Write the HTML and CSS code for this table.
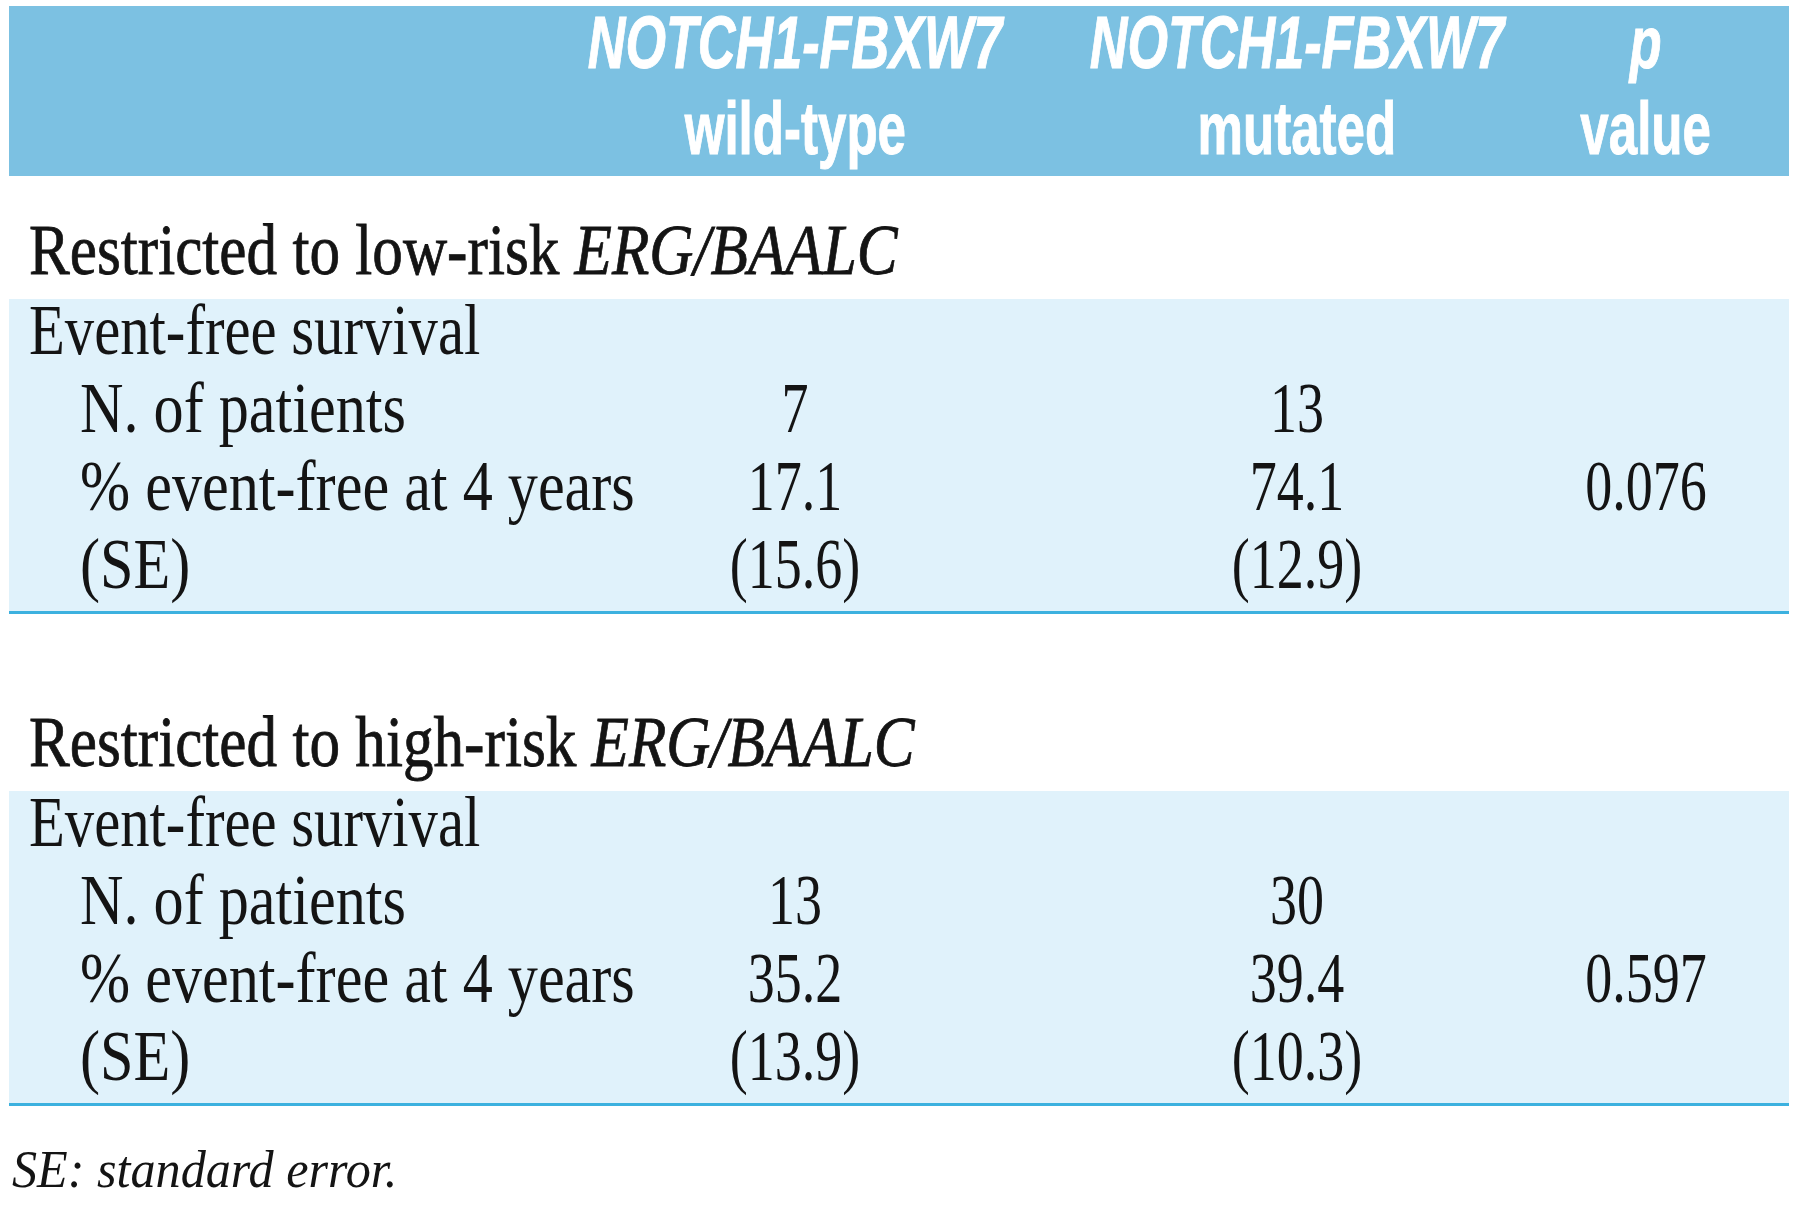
FILE: index.html
```html
<!DOCTYPE html>
<html lang="en">
<head>
<meta charset="utf-8">
<title>NOTCH1-FBXW7 event-free survival</title>
<link rel="stylesheet" href="styles.css">
</head>
<body>
<div class="table">
  <div class="thead">
    <div class="hcell"></div>
    <div class="hcell">
      <div class="l1"><span class="hx it">NOTCH1-FBXW7</span></div>
      <div class="l2"><span class="hx">wild-type</span></div>
    </div>
    <div class="hcell">
      <div class="l1"><span class="hx it">NOTCH1-FBXW7</span></div>
      <div class="l2"><span class="hx">mutated</span></div>
    </div>
    <div class="hcell">
      <div class="l1"><span class="hx it">p</span></div>
      <div class="l2"><span class="hx">value</span></div>
    </div>
  </div>

  <section class="group">
    <div class="gtitle"><span class="tt">Restricted to low-risk <i>ERG/BAALC</i></span></div>
    <div class="band">
      <div class="row">
        <div class="lab"><span class="tl">Event-free survival</span></div>
        <div class="num"></div><div class="num"></div><div class="num"></div>
      </div>
      <div class="row">
        <div class="lab sub"><span class="tl">N. of patients</span></div>
        <div class="num"><span class="tn">7</span></div>
        <div class="num"><span class="tn">13</span></div>
        <div class="num"></div>
      </div>
      <div class="row">
        <div class="lab sub"><span class="tl">% event-free at 4 years</span></div>
        <div class="num"><span class="tn">17.1</span></div>
        <div class="num"><span class="tn">74.1</span></div>
        <div class="num"><span class="tn">0.076</span></div>
      </div>
      <div class="row">
        <div class="lab sub"><span class="tl">(SE)</span></div>
        <div class="num"><span class="tn">(15.6)</span></div>
        <div class="num"><span class="tn">(12.9)</span></div>
        <div class="num"></div>
      </div>
    </div>
  </section>

  <section class="group second">
    <div class="gtitle"><span class="tt">Restricted to high-risk <i>ERG/BAALC</i></span></div>
    <div class="band">
      <div class="row">
        <div class="lab"><span class="tl">Event-free survival</span></div>
        <div class="num"></div><div class="num"></div><div class="num"></div>
      </div>
      <div class="row">
        <div class="lab sub"><span class="tl">N. of patients</span></div>
        <div class="num"><span class="tn">13</span></div>
        <div class="num"><span class="tn">30</span></div>
        <div class="num"></div>
      </div>
      <div class="row">
        <div class="lab sub"><span class="tl">% event-free at 4 years</span></div>
        <div class="num"><span class="tn">35.2</span></div>
        <div class="num"><span class="tn">39.4</span></div>
        <div class="num"><span class="tn">0.597</span></div>
      </div>
      <div class="row">
        <div class="lab sub"><span class="tl">(SE)</span></div>
        <div class="num"><span class="tn">(13.9)</span></div>
        <div class="num"><span class="tn">(10.3)</span></div>
        <div class="num"></div>
      </div>
    </div>
  </section>

  <p class="note"><span class="tf">SE: standard error.</span></p>
</div>
</body>
</html>
```

FILE: styles.css
```css
html, body {
  margin: 0;
  padding: 0;
  background: #ffffff;
}

body {
  font-family: "Liberation Serif", "Times New Roman", serif;
  color: #141414;
}

.table {
  width: 1780px;
  padding: 6px 0 0 9px;
}

/* ---------- header ---------- */
.thead {
  display: grid;
  grid-template-columns: 490px 592px 412px 286px;
  height: 170px;
  background: #7cc1e2;
  color: #ffffff;
  font-family: "Liberation Sans", Arial, sans-serif;
  font-weight: 700;
  font-size: 74px;
  -webkit-text-stroke: 1px #ffffff;
}

.hcell {
  min-width: 0;
  white-space: nowrap;
}

.l1,
.l2 {
  display: flex;
  justify-content: center;
}

.l1 {
  line-height: 74px;
}

.l2 {
  padding-top: 2px;
  line-height: 94px;
}

.hx {
  display: inline-block;
  flex: none;
  transform: scaleX(0.69);
  transform-origin: center;
}

.hx.it {
  font-style: italic;
  transform: scaleX(0.705);
}

/* ---------- groups ---------- */
.group.second {
  margin-top: 54px;
}

.gtitle {
  padding: 26px 0 0 20px;
  font-size: 72px;
  line-height: 97px;
  white-space: nowrap;
  -webkit-text-stroke: 0.8px #141414;
}

.tt {
  display: inline-block;
  transform: scaleX(0.85);
  transform-origin: left center;
}

.band {
  background: #e0f2fb;
  border-bottom: 3px solid #3cb1df;
}

.row {
  display: grid;
  grid-template-columns: 490px 592px 412px 286px;
  font-size: 72px;
  line-height: 63px;
  padding-bottom: 15px;
  white-space: nowrap;
}

.lab {
  padding-left: 20px;
}

.lab.sub {
  padding-left: 71px;
}

.tl {
  display: inline-block;
  transform: scaleX(0.815);
  transform-origin: left center;
}

.lab.sub .tl {
  transform: scaleX(0.836);
}

.num {
  text-align: center;
}

.tn {
  display: inline-block;
  transform: scaleX(0.75);
  transform-origin: center;
}

/* ---------- footnote ---------- */
.note {
  margin: 0;
  padding: 33px 0 0 3px;
  font-size: 53px;
  line-height: 60px;
  font-style: italic;
  white-space: nowrap;
}

.tf {
  display: inline-block;
  transform: scaleX(0.947);
  transform-origin: left center;
}
```
